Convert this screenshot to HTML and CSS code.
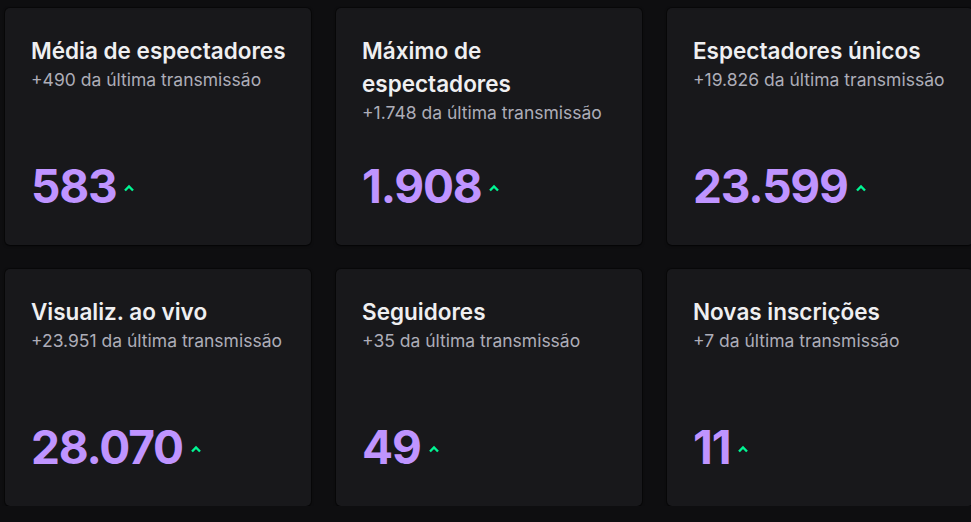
FILE: index.html
```html
<!DOCTYPE html>
<html lang="pt-BR">
<head>
    <meta charset="UTF-8">
    <meta name="viewport" content="width=device-width, initial-scale=1.0">
    <title>Estatísticas da transmissão</title>
    <link rel="stylesheet" href="styles.css">
</head>
<body>
    <div class="stats">
        <div class="card">
            <div class="title">Média de espectadores</div>
            <div class="delta">+490 da última transmissão</div>
            <div class="value">583 <svg class="up" viewBox="0 0 12 8"><path d="M2 6.5 L6 2.5 L10 6.5"/></svg></div>
        </div>
        <div class="card">
            <div class="title">Máximo de espectadores</div>
            <div class="delta">+1.748 da última transmissão</div>
            <div class="value">1.908 <svg class="up" viewBox="0 0 12 8"><path d="M2 6.5 L6 2.5 L10 6.5"/></svg></div>
        </div>
        <div class="card">
            <div class="title">Espectadores únicos</div>
            <div class="delta">+19.826 da última transmissão</div>
            <div class="value">23.599 <svg class="up" viewBox="0 0 12 8"><path d="M2 6.5 L6 2.5 L10 6.5"/></svg></div>
        </div>

        <div class="card">
            <div class="title">Visualiz. ao vivo</div>
            <div class="delta">+23.951 da última transmissão</div>
            <div class="value">28.070 <svg class="up" viewBox="0 0 12 8"><path d="M2 6.5 L6 2.5 L10 6.5"/></svg></div>
        </div>
        <div class="card">
            <div class="title">Seguidores</div>
            <div class="delta">+35 da última transmissão</div>
            <div class="value">49 <svg class="up" viewBox="0 0 12 8"><path d="M2 6.5 L6 2.5 L10 6.5"/></svg></div>
        </div>
        <div class="card">
            <div class="title">Novas inscrições</div>
            <div class="delta">+7 da última transmissão</div>
            <div class="value">11 <svg class="up" viewBox="0 0 12 8"><path d="M2 6.5 L6 2.5 L10 6.5"/></svg></div>
        </div>
    </div>
</body>
</html>
```

FILE: styles.css
```css
body {
    margin: 0;
    font-family: Inter, "Noto Sans", sans-serif;
    background-color: #0e0e10;
    overflow: hidden;
}
.stats {
    display: grid;
    grid-template-columns: repeat(3, 306px);
    grid-auto-rows: 237px;
    column-gap: 25px;
    row-gap: 24px;
    padding: 8px 0 0 5px;
}
.card {
    display: flex;
    flex-direction: column;
    background-color: #18181b;
    border-radius: 5px;
    box-shadow: 0 0 0 1px rgba(0, 0, 0, 0.35), 0 1px 3px rgba(0, 0, 0, 0.5);
    padding: 26px 16px 30px 26px;
}
.title {
    color: #efeff1;
    font-size: 22.5px;
    font-weight: 600;
    line-height: 33px;
    max-width: 262px;
}
.delta {
    color: #adadb8;
    font-size: 17.5px;
    line-height: 26px;
}
.value {
    margin-top: auto;
    display: flex;
    align-items: center;
    gap: 7px;
    color: #bf94ff;
    font-size: 46px;
    font-weight: 700;
    letter-spacing: -1.2px;
    line-height: 58px;
}
.up {
    width: 12px;
    height: 8px;
    margin-top: 4px;
    fill: none;
    stroke: #00f593;
    stroke-width: 2.4;
}
```
